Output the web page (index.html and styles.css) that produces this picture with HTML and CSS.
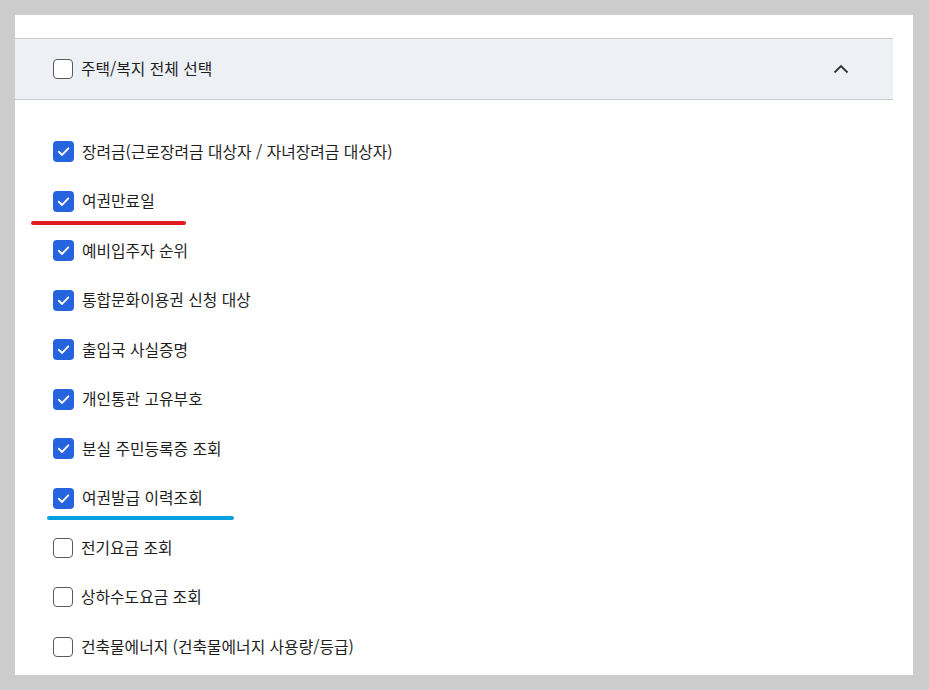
FILE: index.html
```html
<!DOCTYPE html>
<html lang="ko">
<head>
<meta charset="utf-8">
<link rel="stylesheet" href="styles.css">
</head>
<body>
<div class="panel">
  <div class="head">
    <label class="item">
      <span class="box"></span>
      <span class="label">주택/복지 전체 선택</span>
    </label>
    <svg class="chev" width="16" height="10" viewBox="0 0 16 10"><path d="M1.5 8.5 L8 2 L14.5 8.5" fill="none" stroke="#333" stroke-width="1.8"/></svg>
  </div>
  <ul class="list">
    <li class="item"><span class="box on"><svg viewBox="0 0 20 20"><path d="M5.5 10.2 L8.7 13.3 L14.6 7" fill="none" stroke="#fff" stroke-width="1.8" stroke-linecap="round" stroke-linejoin="round"/></svg></span><span class="label">장려금(근로장려금 대상자 / 자녀장려금 대상자)</span></li>
    <li class="item"><span class="box on"><svg viewBox="0 0 20 20"><path d="M5.5 10.2 L8.7 13.3 L14.6 7" fill="none" stroke="#fff" stroke-width="1.8" stroke-linecap="round" stroke-linejoin="round"/></svg></span><span class="label">여권만료일</span><span class="mark red"></span></li>
    <li class="item"><span class="box on"><svg viewBox="0 0 20 20"><path d="M5.5 10.2 L8.7 13.3 L14.6 7" fill="none" stroke="#fff" stroke-width="1.8" stroke-linecap="round" stroke-linejoin="round"/></svg></span><span class="label">예비입주자 순위</span></li>
    <li class="item"><span class="box on"><svg viewBox="0 0 20 20"><path d="M5.5 10.2 L8.7 13.3 L14.6 7" fill="none" stroke="#fff" stroke-width="1.8" stroke-linecap="round" stroke-linejoin="round"/></svg></span><span class="label">통합문화이용권 신청 대상</span></li>
    <li class="item"><span class="box on"><svg viewBox="0 0 20 20"><path d="M5.5 10.2 L8.7 13.3 L14.6 7" fill="none" stroke="#fff" stroke-width="1.8" stroke-linecap="round" stroke-linejoin="round"/></svg></span><span class="label">출입국 사실증명</span></li>
    <li class="item"><span class="box on"><svg viewBox="0 0 20 20"><path d="M5.5 10.2 L8.7 13.3 L14.6 7" fill="none" stroke="#fff" stroke-width="1.8" stroke-linecap="round" stroke-linejoin="round"/></svg></span><span class="label">개인통관 고유부호</span></li>
    <li class="item"><span class="box on"><svg viewBox="0 0 20 20"><path d="M5.5 10.2 L8.7 13.3 L14.6 7" fill="none" stroke="#fff" stroke-width="1.8" stroke-linecap="round" stroke-linejoin="round"/></svg></span><span class="label">분실 주민등록증 조회</span></li>
    <li class="item"><span class="box on"><svg viewBox="0 0 20 20"><path d="M5.5 10.2 L8.7 13.3 L14.6 7" fill="none" stroke="#fff" stroke-width="1.8" stroke-linecap="round" stroke-linejoin="round"/></svg></span><span class="label">여권발급 이력조회</span><span class="mark blue"></span></li>
    <li class="item"><span class="box"></span><span class="label">전기요금 조회</span></li>
    <li class="item"><span class="box"></span><span class="label">상하수도요금 조회</span></li>
    <li class="item"><span class="box"></span><span class="label">건축물에너지 (건축물에너지 사용량/등급)</span></li>
  </ul>
</div>
</body>
</html>
```
FILE: styles.css
```css
html, body {
  margin: 0;
  padding: 0;
  background: #cccccc;
}
body {
  font-family: "Noto Sans CJK KR", "Noto Sans", sans-serif;
  color: #222;
}
.panel {
  margin: 15px 0 0 15px;
  width: 898px;
  height: 660px;
  background: #fff;
  padding-top: 23px;
  box-sizing: border-box;
  overflow: hidden;
}
.head {
  margin-left: -2px;
  width: 880px;
  height: 62px;
  box-sizing: border-box;
  background: #edf0f4;
  border-top: 1px solid #c9cbce;
  border-bottom: 1px solid #c9cbce;
  display: flex;
  align-items: center;
  justify-content: space-between;
  padding: 0 44px 0 40px;
}
.item {
  display: flex;
  align-items: center;
  gap: 8px;
  position: relative;
}
.box {
  width: 20px;
  height: 20px;
  box-sizing: border-box;
  border: 1.5px solid #5a5a5a;
  border-radius: 4px;
  background: #fff;
  flex: none;
  display: flex;
}
.box.on {
  width: 21px;
  height: 21px;
  border: none;
  background: #2563df;
  border-radius: 4px;
}
.box svg {
  width: 21px;
  height: 21px;
}
.label {
  font-size: 15.8px;
  line-height: 20px;
  color: #1e1e1e;
}
.chev {
  display: block;
}
.list {
  list-style: none;
  margin: 0;
  padding: 27px 0 0 38px;
}
.list .item {
  height: 49.5px;
}
.mark {
  position: absolute;
  height: 4px;
  border-radius: 2px;
}
.mark.red {
  left: -22px;
  width: 155px;
  top: 44.5px;
  background: #e21b23;
}
.mark.blue {
  left: -6px;
  width: 187px;
  top: 42.5px;
  background: #0aa0e0;
}
```
